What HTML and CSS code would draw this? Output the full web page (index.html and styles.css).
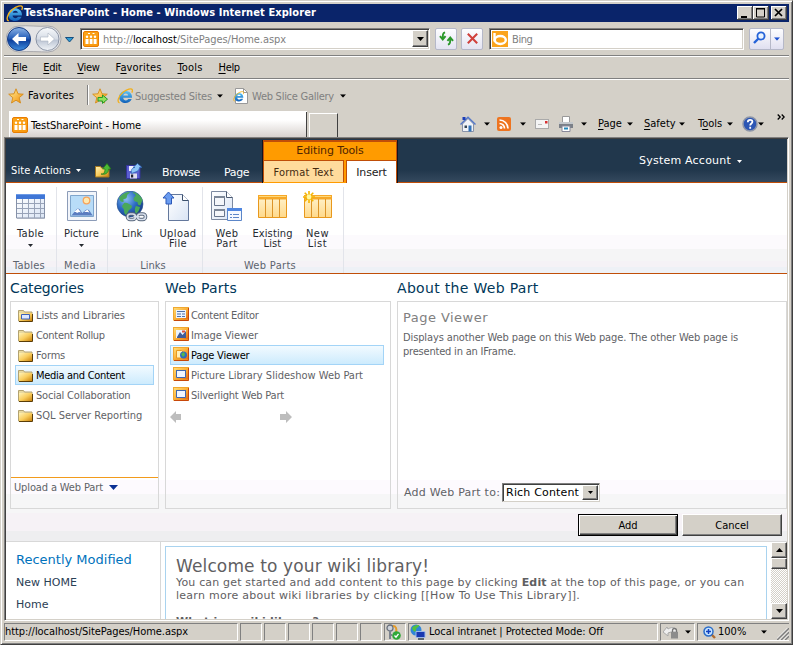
FILE: index.html
```html
<!DOCTYPE html>
<html lang="en">
<head>
<meta charset="utf-8">
<title>TestSharePoint - Home</title>
<link rel="stylesheet" href="styles.css">
</head>
<body>
<svg class="defs" width="0" height="0">
  <defs>
    <linearGradient id="gBlue" x1="0" y1="0" x2="0" y2="1"><stop offset="0" stop-color="#8db4e6"/><stop offset=".45" stop-color="#2a62bb"/><stop offset=".55" stop-color="#0d3f9c"/><stop offset="1" stop-color="#3f8fe0"/></linearGradient>
    <linearGradient id="gGrey" x1="0" y1="0" x2="0" y2="1"><stop offset="0" stop-color="#f8fafc"/><stop offset=".5" stop-color="#d5dbe5"/><stop offset=".55" stop-color="#bcc5d4"/><stop offset="1" stop-color="#f2f5f8"/></linearGradient>
    <linearGradient id="gFolder" x1="0" y1="0" x2="1" y2="1"><stop offset="0" stop-color="#fff3b8"/><stop offset=".5" stop-color="#f8cc5c"/><stop offset="1" stop-color="#c87f08"/></linearGradient>
    <linearGradient id="gStar" x1="0" y1="0" x2="1" y2="1"><stop offset="0" stop-color="#fff3a0"/><stop offset="1" stop-color="#f28a00"/></linearGradient>
    <linearGradient id="gOrange" x1="0" y1="0" x2="1" y2="1"><stop offset="0" stop-color="#fba51c"/><stop offset="1" stop-color="#f9980c"/></linearGradient>
    <linearGradient id="gPart" x1="0" y1="0" x2="1" y2="1"><stop offset="0" stop-color="#ffe07a"/><stop offset=".5" stop-color="#fbb03a"/><stop offset="1" stop-color="#e0620c"/></linearGradient>
    <linearGradient id="gSheet" x1="0" y1="0" x2="1" y2="1"><stop offset="0" stop-color="#fff"/><stop offset="1" stop-color="#d9e4f4"/></linearGradient>
    <linearGradient id="gList" x1="0" y1="0" x2="0" y2="1"><stop offset="0" stop-color="#fff4d0"/><stop offset="1" stop-color="#ffd98a"/></linearGradient>
    <linearGradient id="gIe" x1="0" y1="0" x2="0" y2="1"><stop offset="0" stop-color="#5cc4f6"/><stop offset="1" stop-color="#0f5fb8"/></linearGradient>
    <radialGradient id="gGlobe" cx=".35" cy=".3" r=".8"><stop offset="0" stop-color="#8cc0f4"/><stop offset=".5" stop-color="#2e6cc4"/><stop offset="1" stop-color="#12357c"/></radialGradient>
    <symbol id="caret" viewBox="0 0 7 4"><path d="M0 0h7L3.5 4z"/></symbol>
    <symbol id="ie" viewBox="0 0 16 16"><path d="M15 9.800H6.200c.2 3 4 3.400 5 1.300h3.500C12.500 17 2.200 16.500 2.200 9 2.200.8 15.600.8 15 9.800zM6.300 7.400h4.900c-.3-2.700-4.500-2.700-4.900 0z" fill="url(#gIe)"/><path d="M2.600 15C-.2 14.200 1 8.500 6 4.300 10 1 14.600 0 15.300 1.700c.3.800 0 1.900-.5 2.900" fill="none" stroke="#f2b01c" stroke-width="1.300"/></symbol>
    <symbol id="site" viewBox="0 0 16 16"><rect x=".5" y=".5" width="15" height="15" rx="1.500" fill="url(#gOrange)" stroke="#e87c00"/><path d="M2.500 8h3v5h-3zM6.700 8h2.800v5H6.700zM10.600 8h3v5h-3z" fill="#fff"/><circle cx="4" cy="5.700" r="1.200" fill="#fff"/><circle cx="8" cy="5.700" r="1.200" fill="#fff"/><circle cx="12" cy="5.700" r="1.200" fill="#fff"/><path d="M5 2.500h2M9.500 2.500h2" stroke="#fff"/></symbol>
    <symbol id="folder" viewBox="0 0 15 13"><path d="M.5 1.500h5l1 1.500h7.500v9H.5z" fill="#e8d9a0" stroke="#b3a270"/><path d="M1 4h13v8.500H1z" fill="url(#gFolder)"/><path d="M1 12.500h13.500V5" fill="none" stroke="#5a3d08"/></symbol>
    <symbol id="part" viewBox="0 0 16 14"><rect x=".5" y=".5" width="15" height="12.500" fill="url(#gPart)" stroke="#f0a830"/><path d="M15.500 1v12.500H1" fill="none" stroke="#c8480a"/></symbol>
    <symbol id="star" viewBox="0 0 16 16"><path d="M8 .8l2 5 5.300.4-4.100 3.500 1.300 5.300L8 12.200 3.500 15l1.300-5.300L.7 6.200 6 5.800z" fill="url(#gStar)" stroke="#d58a18" stroke-width=".9"/></symbol>
  </defs>
</svg>

<div class="window">
  <header class="title-bar">
    <svg class="title-icon" viewBox="0 0 16 16"><use href="#ie"/></svg>
    <span class="title-text">TestSharePoint - Home - Windows Internet Explorer</span>
    <span class="caption">
      <svg viewBox="0 0 16 14"><path d="M4 10h6v2H4z"/></svg>
      <svg viewBox="0 0 16 14"><path d="M3.500 3h8v8h-8zM3 2.500h9" fill="none" stroke="#000"/></svg>
      <svg class="close" viewBox="0 0 16 14"><path d="M4 3l7 7M11 3l-7 7" fill="none" stroke="#000" stroke-width="1.700"/></svg>
    </span>
  </header>

  <div class="nav-bar">
    <svg class="travel" viewBox="0 0 56 28">
      <path d="M13 1c8-1 20 1 29 0a13 13 0 0 1 0 26c-8 0-20-1-29 0a13 13 0 0 1 0-26z" fill="#e4e4e6" stroke="#a8a8ac"/>
      <circle cx="13" cy="14" r="11.500" fill="url(#gBlue)" stroke="#173d84"/>
      <path d="M6 14l6.500-6v4h7.500v4h-7.500v4z" fill="#fff"/>
      <circle cx="41.500" cy="14" r="11.500" fill="url(#gGrey)" stroke="#8b94a5"/>
      <path d="M48.500 14L42 8v4h-7.500v4H42v4z" fill="#fff" stroke="#aab2c0" stroke-width=".6"/>
    </svg>
    <svg class="recent" viewBox="0 0 9 6"><path d="M.5.500h8L4.500 5z" fill="#2f9cd4" stroke="#154f80"/></svg>
    <div class="field address">
      <svg class="i16" viewBox="0 0 16 16"><use href="#site"/></svg>
      <span class="url">http://<b>localhost</b>/SitePages/Home.aspx</span>
      <span class="drop-btn"><svg viewBox="0 0 7 4"><use href="#caret"/></svg></span>
    </div>
    <span class="tool-btn"><svg viewBox="0 0 16 16"><path d="M6.500 1.500C4 2 4 4 4 8M1 5.500L4 9l3-3.500M9.500 14.500c2.500-.5 2.500-2.500 2.500-6.500M9 10.500L12 7l3 3.500" fill="none" stroke="#2b982b" stroke-width="2"/></svg></span>
    <span class="tool-btn stop"><svg viewBox="0 0 16 16"><path d="M3 3l10 10M13 3L3 13" stroke="#d0403c" stroke-width="2.200"/></svg></span>
    <div class="field search">
      <svg class="i16" viewBox="0 0 16 16"><path d="M0 0h16v16H0z" fill="#fba41c"/><path d="M2.500 2v8.500" stroke="#fff" stroke-width="2.400"/><ellipse cx="8.300" cy="9" rx="5.500" ry="4" fill="none" stroke="#fff" stroke-width="2.400"/></svg>
      <span>Bing</span>
    </div>
    <div class="go">
      <svg class="lens" viewBox="0 0 13 13"><circle cx="8" cy="5" r="3.600" fill="#e8f2ff" stroke="#2563d8" stroke-width="1.800"/><path d="M5.500 7.500L1 12" stroke="#2563d8" stroke-width="2.400"/></svg>
      <span class="go-drop"><svg viewBox="0 0 7 4"><use href="#caret"/></svg></span>
    </div>
  </div>

  <nav class="menu-bar">
    <span><u>F</u>ile</span><span><u>E</u>dit</span><span><u>V</u>iew</span><span class="loose">F<u>a</u>vorites</span><span class="loose"><u>T</u>ools</span><span><u>H</u>elp</span>
  </nav>

  <div class="fav-bar">
    <svg class="i16" viewBox="0 0 16 16"><use href="#star"/></svg>
    <span class="fav-label">Favorites</span>
    <span class="fav-sep"></span>
    <svg class="i16 add" viewBox="0 0 16 16"><use href="#star"/><path d="M6 9.500h4.500V7l5 4.200-5 4.200V13H6z" fill="#8fe05c" stroke="#259a28"/></svg>
    <svg class="i16 ie" viewBox="0 0 16 16"><use href="#ie"/></svg>
    <span class="fav-link sites">Suggested Sites</span>
    <svg class="caret" viewBox="0 0 7 4"><use href="#caret"/></svg>
    <svg class="i16 slice" viewBox="0 0 16 16"><path d="M2.500.5h8l4 4v11h-12z" fill="#fff" stroke="#999"/><path d="M10.500.5v4h4" fill="none" stroke="#999"/><use href="#ie" x="0" y="3" width="11" height="11"/></svg>
    <span class="fav-link gallery">Web Slice Gallery</span>
    <svg class="caret" viewBox="0 0 7 4"><use href="#caret"/></svg>
  </div>

  <div class="tab-bar">
    <div class="tab"><svg class="i16" viewBox="0 0 16 16"><use href="#site"/></svg><span>TestSharePoint - Home</span></div>
    <div class="new-tab"></div>
    <div class="commands">
      <svg class="i16" viewBox="0 0 16 16"><path d="M2.500 8v7.500h11V8L8 2.500z" fill="#f1f3f8" stroke="#8a93a8"/><path d="M.5 8.500L8 1.200l7.500 7.300" fill="none" stroke="#5578c8" stroke-width="1.500"/><path d="M2.500 1h3v3h-3z" fill="#1a3cb8"/><path d="M8.500 9.500h3v6h-3z" fill="#3272b8"/><path d="M4.500 9.500h2.500v2.500H4.500z" fill="#345"/></svg>
      <svg class="caret c1" viewBox="0 0 7 4"><use href="#caret"/></svg>
      <svg class="rss" viewBox="0 0 14 14"><rect width="14" height="14" rx="2" fill="#ee7420"/><circle cx="4" cy="10.500" r="1.500" fill="#fff"/><path d="M2.500 6.500a5 5 0 0 1 5 5M2.500 3a8.500 8.500 0 0 1 8.500 8.500" fill="none" stroke="#fff" stroke-width="1.700"/></svg>
      <svg class="caret c2" viewBox="0 0 7 4"><use href="#caret"/></svg>
      <svg class="mail" viewBox="0 0 15 10"><rect x=".5" y=".5" width="13" height="9" fill="#f4f4f4" stroke="#aaa"/><path d="M10 2h2.500v2.500H10z" fill="#d83030"/><path d="M3 5.500h4" stroke="#bbb"/></svg>
      <svg class="i16 printer" viewBox="0 0 16 16"><path d="M4.500 6V.5h7V6" fill="#fff" stroke="#999"/><path d="M1 6h14v6H1z" fill="#7b8088"/><path d="M1 6h14v2H1z" fill="#c4c8cc"/><path d="M4 10h8v5.500H4z" fill="#fff" stroke="#889"/><path d="M6 12.500h4" stroke="#28b" stroke-width="2"/></svg>
      <svg class="caret c3" viewBox="0 0 7 4"><use href="#caret"/></svg>
      <span class="cmd cmd-page"><u>P</u>age</span><svg class="caret" viewBox="0 0 7 4"><use href="#caret"/></svg>
      <span class="cmd cmd-safety"><u>S</u>afety</span><svg class="caret" viewBox="0 0 7 4"><use href="#caret"/></svg>
      <span class="cmd cmd-tools">T<u>o</u>ols</span><svg class="caret" viewBox="0 0 7 4"><use href="#caret"/></svg>
      <svg class="i16 help" viewBox="0 0 16 16"><circle cx="8" cy="8" r="7" fill="#2c56b4" stroke="#8d95a8" stroke-width="1.500"/><path d="M5.800 6.200c0-3.200 4.600-3 4.600-.4 0 1.700-2.200 1.700-2.200 3.700M8.200 10.800v1.900" fill="none" stroke="#fff" stroke-width="1.800"/></svg>
      <svg class="caret" viewBox="0 0 7 4"><use href="#caret"/></svg>
      <svg class="more" viewBox="0 0 8 6"><path d="M.7.5L3.200 3 .7 5.500M4.700.5L7.200 3 4.700 5.500" fill="none" stroke="#000" stroke-width="1.300"/></svg>
    </div>
  </div>

  <main class="viewport">
    <div class="sp-header">
      <span class="site-actions">Site Actions</span>
      <svg class="caret small" viewBox="0 0 7 4"><use href="#caret"/></svg>
      <svg class="i16 up" viewBox="0 0 16 16"><path d="M.5 4.500h5l1 1.500h7.500v9H.5z" fill="url(#gFolder)" stroke="#a47820"/><path d="M6 12c3 .5 4-2 4-5H7.500L12 1.500 16 7h-2.500c0 4-3 6-7.500 5z" fill="#4cb834" stroke="#1f7a18" stroke-width=".7"/></svg>
      <svg class="i16 save" viewBox="0 0 16 16"><path d="M.5 2.500h13.500v13H.5z" fill="#5a5ed0" stroke="#34349a"/><path d="M3 3h8v5H3z" fill="#eef"/><path d="M4 10.500h7v5H4z" fill="#dde"/><path d="M5 11.500h2.200v3H5z" fill="#223"/><path d="M5.500 10.500C4.500 6 7 4.500 9 4.500H7L11.500.5 16 4.500h-2.500c-.5 4-3 4-8 6z" fill="#8cc4f6" stroke="#2860b0" stroke-width=".7"/></svg>
      <span class="top-tab browse">Browse</span>
      <span class="top-tab page-tab">Page</span>
      <div class="context">
        <div class="context-name">Editing Tools</div>
        <div class="context-tabs"><span class="format">Format Text</span><span class="insert">Insert</span></div>
      </div>
      <div class="account"><span>System Account</span><svg class="caret small" viewBox="0 0 7 4"><use href="#caret"/></svg></div>
    </div>

    <div class="ribbon">
      <section class="group g-tables">
        <div class="cmds"><div class="cmd-btn">
          <svg class="i32" viewBox="0 0 32 32"><path d="M2 5.500h28V28H2z" fill="#cfd3da"/><path d="M1.500 4.500h28V27h-28z" fill="url(#gSheet)" stroke="#8591a8"/><path d="M1 3h29v5H1z" fill="#3f76d6"/><path d="M1 3.500h29" stroke="#6c9ae6"/><path d="M7.500 8v19M13.500 8v19M19.500 8v19M25.500 8v19M2 12.500h27M2 17.500h27M2 22.500h27" stroke="#98a3b8"/></svg>
          <span class="lbl l3">Table</span><svg class="caret tiny" viewBox="0 0 7 4"><use href="#caret"/></svg></div></div>
        <h3 class="l2">Tables</h3>
      </section>
      <section class="group g-media">
        <div class="cmds"><div class="cmd-btn">
          <svg class="i32" viewBox="0 0 32 32"><path d="M1.500.5h29v29h-29z" fill="#f2f5fa" stroke="#8c9cb8"/><path d="M4.500 4.500h23v21h-23z" fill="#b8dcf8" stroke="#7fa5cc"/><circle cx="20.500" cy="9.500" r="3.300" fill="#ffe9b0" stroke="#f8a45c" stroke-width="1.300"/><path d="M5 24.500c3-2 5-7 7-7s3 3 4.500 4.500c2-2 3-3.500 5-3.500s3 3.500 5.500 6z" fill="#5a7cc0"/><path d="M8 21l4-3.500 3 4-2-.5-2 1-1-1zM18 21l3.500-2.500 2 3-2-.5z" fill="#fff"/></svg>
          <span class="lbl">Picture</span><svg class="caret tiny" viewBox="0 0 7 4"><use href="#caret"/></svg></div></div>
        <h3 class="l4">Media</h3>
      </section>
      <section class="group g-links">
        <div class="cmds"><div class="cmd-btn w46">
          <svg class="i32" viewBox="0 0 32 32"><circle cx="14" cy="13" r="13" fill="url(#gGlobe)" stroke="#28508c" stroke-width=".6"/><path d="M3 7c3-4 7-6.500 11-6-1 2-3 2-3 4s-1 3-3 3 1 3-1 3-3-1-4-4zM17 1c5 1 8 4 9.500 8l-2 5c-2 1-3-1-3-3-2 0-4-1-4-3s2-2 2-4-3-1-2.500-3zM8 12c3-1 5 1 8 3 0 3-3 3-4 6l-2 3c-3-2-1-5-3-7s0-3 1-5zM20 15l4 1c-.500 3-2 5-4 7-1-2-2-5 0-8z" fill="#4aa85a"/><g fill="none" stroke="#58677c" stroke-width="3.600"><rect x="11.500" y="23" width="8" height="5.500" rx="2.700"/><rect x="21.500" y="23" width="8" height="5.500" rx="2.700"/></g><g fill="none" stroke="#d8e0ec" stroke-width="1.700"><rect x="11.500" y="23" width="8" height="5.500" rx="2.700"/><rect x="21.500" y="23" width="8" height="5.500" rx="2.700"/><path d="M17.500 25.700h6"/></g></svg>
          <span class="lbl">Link</span></div>
        <div class="cmd-btn w44">
          <svg class="i32" viewBox="0 0 32 32"><path d="M6.500 3.500h14l6 6v20h-20z" fill="url(#gSheet)" stroke="#64789c"/><path d="M20.500 3.500v6h6" fill="#fff" stroke="#3c506c"/><path d="M6.500 1l5.500 6H9.500v6H4V7H1z" fill="#6a9cf0" stroke="#2c58b8"/></svg>
          <span class="lbl l5">Upload<br>File</span></div></div>
        <h3>Links</h3>
      </section>
      <section class="group g-parts">
        <div class="cmds"><div class="cmd-btn w46">
          <svg class="i32" viewBox="0 0 32 32"><path d="M.5.5h15l6 6v22H.5z" fill="url(#gSheet)" stroke="#7c89a0"/><path d="M15.500.5v6h6" fill="#fff" stroke="#4a5870"/><path d="M3.500 5.500h10v9h-10zM3.500 18.500h10v7h-10z" fill="#f4f6fa" stroke="#68758c"/><path d="M3 6h11M3 19h11" stroke="#7c8798" stroke-width="2"/><path d="M16.500 17.500h14v12h-14z" fill="#f4f9ff" stroke="#5c86c8"/><path d="M16 17h15v3H16z" fill="#4f86e0"/><path d="M19 23.500h2M19 26.500h2M22 23.500h6M22 26.500h6" stroke="#5c86c8"/></svg>
          <span class="lbl l4">Web<br>Part</span></div>
        <div class="cmd-btn w44">
          <svg class="i32" viewBox="0 0 32 32"><path d="M1.500 4.500h28v22h-28z" fill="url(#gList)" stroke="#e8981c"/><path d="M1 4h29v4.500H1z" fill="#f6a828"/><path d="M2 5.500h27" stroke="#ffd878"/><path d="M8.500 8v18M15.500 8v18M22.500 8v18" stroke="#dc9428"/></svg>
          <span class="lbl">Existing<br>List</span></div>
        <div class="cmd-btn w45">
          <svg class="i32" viewBox="0 0 32 32"><path d="M2.500 4.500h27v22h-27z" fill="url(#gList)" stroke="#e8981c"/><path d="M2 4h28v4.500H2z" fill="#f6a828"/><path d="M2 5.500h27" stroke="#ffd878"/><path d="M9.500 8v18M16.500 8v18M23.500 8v18" stroke="#dc9428"/><path d="M7 0v12M1 6h12M2.700 1.700l8.600 8.600M11.300 1.700l-8.600 8.600" stroke="#f4b400" stroke-width="1.600"/><circle cx="7" cy="6" r="2.400" fill="#fff8a0"/></svg>
          <span class="lbl l4">New<br>List</span></div></div>
        <h3 class="l3 web-parts">Web Parts</h3>
      </section>
    </div>

    <div class="picker">
      <div class="columns">
        <section class="col-cat">
          <h2 class="h-cat">Categories</h2>
          <div class="box">
            <ul class="list cats">
              <li><svg viewBox="0 0 15 13"><use href="#folder"/><path d="M3.500 5.500h8v4.500h-8z" fill="#dce8ff" stroke="#3c62b8"/></svg><span class="n0">Lists and Libraries</span></li>
              <li><svg viewBox="0 0 15 13"><use href="#folder"/></svg><span class="n3">Content Rollup</span></li>
              <li><svg viewBox="0 0 15 13"><use href="#folder"/></svg><span class="n2">Forms</span></li>
              <li class="selected"><svg viewBox="0 0 15 13"><use href="#folder"/></svg><span class="n3">Media and Content</span></li>
              <li><svg viewBox="0 0 15 13"><use href="#folder"/></svg><span class="n2">Social Collaboration</span></li>
              <li><svg viewBox="0 0 15 13"><use href="#folder"/></svg><span>SQL Server Reporting</span></li>
            </ul>
            <div class="upload"><span>Upload a Web Part</span><svg viewBox="0 0 9 5"><path d="M0 0h9L4.500 5z" fill="#0b3194"/></svg></div>
          </div>
        </section>
        <section class="col-parts">
          <h2 class="l2">Web Parts</h2>
          <div class="box">
            <ul class="list parts">
              <li><svg viewBox="0 0 16 14"><use href="#part"/><path d="M3 3h10v8H3z" fill="#eaf3ff"/><path d="M4 4.500h8M4 7h4M9 7h3M4 9.500h4M9 9.500h3" stroke="#5070a8"/></svg><span class="n3">Content Editor</span></li>
              <li><svg viewBox="0 0 16 14"><use href="#part"/><path d="M3 3h10v8H3z" fill="#eaf3ff"/><path d="M4 10l3-5 2.500 3L13 4v7H4z" fill="#405c98"/><path d="M9 3.500h3v2H9z" fill="#e05038"/></svg><span class="n0">Image Viewer</span></li>
              <li class="selected"><svg viewBox="0 0 16 14"><use href="#part"/><path d="M3.500 3.500h5l2 2V11h-7z" fill="#fff0b8" stroke="#e89a20"/><circle cx="10.500" cy="8" r="3.500" fill="#2f6cbc"/><path d="M8 7l3-2 1 3-2 2z" fill="#56b848"/></svg><span class="n2">Page Viewer</span></li>
              <li><svg viewBox="0 0 16 14"><use href="#part"/><path d="M3.500 3.500h9v7h-9z" fill="#f2f7ff" stroke="#4068b0"/><path d="M3 3.500h10" stroke="#4068b0"/></svg><span>Picture Library Slideshow Web Part</span></li>
              <li><svg viewBox="0 0 16 14"><use href="#part"/><path d="M3.500 3.500h9v7h-9z" fill="#f2f7ff" stroke="#4068b0"/><path d="M3 3.500h10" stroke="#4068b0"/></svg><span class="n2">Silverlight Web Part</span></li>
            </ul>
            <div class="pager"><svg viewBox="0 0 12 12"><path d="M0 6l6-6v3h5v6H6v3z"/></svg><svg viewBox="0 0 12 12"><path d="M12 6L6 0v3H0v6h6v3z"/></svg></div>
          </div>
        </section>
        <section class="col-about">
          <h2 class="l3">About the Web Part</h2>
          <div class="box about">
            <h4>Page Viewer</h4>
            <p><span class="n1">Displays another Web page on this Web page. The other Web page is</span><br><span class="n2">presented in an IFrame.</span></p>
            <div class="target"><label>Add Web Part to:</label><span class="select"><span>Rich Content</span><span class="drop-btn"><svg viewBox="0 0 7 4"><use href="#caret"/></svg></span></span></div>
          </div>
        </section>
      </div>
      <div class="actions"><button class="default">Add</button><button>Cancel</button></div>
    </div>

    <div class="page">
      <aside><h2>Recently Modified</h2><a>New HOME</a><a>Home</a></aside>
      <article>
        <h1>Welcome to your wiki library!</h1>
        <p><span>You can get started and add content to this page by clicking <b>Edit</b> at the top of this page, or you can</span><br><span class="wide">learn more about wiki libraries by clicking [[How To Use This Library]].</span></p>
        <h3>What is a wiki library?</h3>
      </article>
      <div class="scrollbar"><span class="sb"><svg viewBox="0 0 7 4"><path d="M0 4h7L3.500 0z"/></svg></span><span class="thumb"></span><span class="sb end"><svg viewBox="0 0 7 4"><use href="#caret"/></svg></span></div>
    </div>
  </main>

  <footer class="status">
    <span class="pane addr">http://localhost/SitePages/Home.aspx</span>
    <span class="pane s"></span><span class="pane s"></span><span class="pane s"></span><span class="pane s"></span><span class="pane s"></span><span class="pane s"></span>
    <span class="pane s key"><svg class="i16" viewBox="0 0 16 16"><circle cx="5" cy="4" r="3" fill="#cdd2da" stroke="#69707c" stroke-width="1.300"/><path d="M5 7v8M5 11h2" stroke="#7c838e" stroke-width="2"/><path d="M8 2c3 0 4 3 3 6" fill="none" stroke="#e49a28" stroke-width="2"/><circle cx="11.500" cy="11.500" r="4.300" fill="#2fa838"/><path d="M9.500 11.500l1.500 1.700 2.500-3.400" fill="none" stroke="#fff" stroke-width="1.300"/></svg></span>
    <span class="pane zone"><svg class="i16" viewBox="0 0 16 16"><circle cx="6" cy="6" r="5.500" fill="#2f86d8"/><path d="M2 4c2-3 5-3 7-3 0 3-3 2-3 5S3 8 2 4z" fill="#54c040"/><path d="M6 7.500h9v6H6z" fill="#1838b0" stroke="#9cb8e8"/><path d="M8 15h6" stroke="#345" stroke-width="1.500"/></svg><span>Local intranet | Protected Mode: Off</span></span>
    <span class="pane lock"><svg class="i16" viewBox="0 0 16 16"><path d="M0 8l4-5 1 2c5-3 8-1 9 3H8l-3 1v3z" fill="#eee" stroke="#a8a8a8"/><path d="M8 8h7v6.500H8z" fill="#8c8c8c"/><path d="M9.500 8V6.500a2 2 0 0 1 4 0V8" fill="none" stroke="#777" stroke-width="1.300"/></svg><svg class="caret" viewBox="0 0 7 4"><use href="#caret"/></svg></span>
    <span class="pane zoom"><svg class="lens" viewBox="0 0 13 13"><path d="M8 8l4 4" stroke="#b06c30" stroke-width="2.400"/><circle cx="5.500" cy="5.500" r="4.500" fill="#c8e4ff" stroke="#2a6cc8" stroke-width="1.500"/><path d="M3 5.500h5M5.500 3v5" stroke="#1040c0" stroke-width="1.500"/></svg><span>100%</span><svg class="caret" viewBox="0 0 7 4"><use href="#caret"/></svg>
      <svg class="grip" viewBox="0 0 12 12"><path d="M0 12L12 0M4 12l8-8M8 12l4-4" stroke="#808080" stroke-width="1.600"/><path d="M-1.500 12L12-1.500M2.500 12L12 2.500M6.500 12L12 6.500" stroke="#fff" stroke-width=".8"/></svg></span>
  </footer>
</div>
</body>
</html>
```
FILE: styles.css
```css
* { box-sizing: border-box; }
body { margin: 0; font: 11px/14px Tahoma, "DejaVu Sans Condensed", sans-serif; color: #000; white-space: nowrap; }
h1, h2, h3, h4, p, ul { margin: 0; padding: 0; font-weight: normal; }
svg { display: block; flex: none; }
.defs { position: absolute; }
u { text-underline-offset: 2px; }
.i16 { width: 16px; height: 16px; }
.i32 { width: 32px; height: 32px; }
.caret { width: 6px; height: 4px; }

.window { width: 793px; height: 645px; padding: 3px; background: #d4d0c8; border: 1px solid #d4d0c8; border-right-color: #404040; border-bottom-color: #404040; box-shadow: inset 1px 1px #fff, inset -1px -1px #808080; display: flex; flex-direction: column; overflow: hidden; }
.window > * { flex: none; }

.title-bar { height: 18px; display: flex; align-items: center; background: #0a246a; color: #fff; }
.title-icon { width: 17px; height: 17px; margin-left: 2px; }
.title-text { margin-left: 1px; font-weight: bold; letter-spacing: .08px; }
.caption { margin-left: auto; margin-right: 2px; display: flex; }
.caption svg { width: 16px; height: 14px; background: #d4d0c8; box-shadow: inset -1px -1px #404040, inset 1px 1px #fff, inset -2px -2px #808080; }
.caption .close { margin-left: 2px; }

.nav-bar { height: 34px; display: flex; align-items: center; border-bottom: 1px solid #808080; }
.travel { width: 56px; height: 28px; margin-left: 2px; }
.recent { width: 9px; height: 6px; margin: 2px 0 0 3px; }
.field { height: 22px; background: #fff; border: 1px solid #808080; border-right-color: #fff; border-bottom-color: #fff; box-shadow: inset 1px 1px #404040, inset -1px -1px #d4d0c8; display: flex; align-items: center; padding: 0 1px 0 2px; color: #808080; }
.address { width: 350px; margin-left: 6px; }
.url { margin-left: 4px; padding-top: 2px; letter-spacing: -.06px; }
.url b { font-weight: normal; color: #000; }
.drop-btn { width: 16px; height: 17px; background: #d4d0c8; border: 1px solid #fff; border-right-color: #404040; border-bottom-color: #404040; box-shadow: inset -1px -1px #808080; display: flex; align-items: center; justify-content: center; }
.drop-btn svg { width: 7px; height: 4px; fill: #000; }
.address .drop-btn { margin-left: auto; }
.tool-btn { width: 22px; height: 22px; margin-left: 5px; border: 1px solid #b5b8c8; border-radius: 2px; background: linear-gradient(#fdfdff, #e4e4f2); display: flex; align-items: center; justify-content: center; }
.tool-btn svg { width: 15px; height: 15px; }
.tool-btn.stop { margin-left: 4px; }
.search { width: 255px; margin-left: 6px; }
.search span { margin-left: 4px; padding-top: 2px; letter-spacing: -.4px; }
.go { width: 35px; height: 22px; margin-left: 5px; border: 1px solid #b5b8c8; border-radius: 2px; background: linear-gradient(#fdfdff, #e0e0f0); display: flex; align-items: center; }
.go .lens { width: 13px; height: 13px; margin: 0 4px 2px 3px; }
.go-drop { align-self: stretch; border-left: 1px solid #b5b8c8; padding: 8px 0 0 3px; }
.go-drop svg { width: 6px; height: 4px; fill: #1c50d0; }

.menu-bar { height: 23px; display: flex; align-items: center; border-top: 1px solid #fff; border-bottom: 1px solid #808080; padding-left: 8px; padding-top: 1px; letter-spacing: -.3px; }
.menu-bar span { margin-right: 16px; }
.menu-bar .loose { letter-spacing: .15px; }

.fav-bar { height: 32px; display: flex; align-items: center; border-top: 1px solid #fff; padding-left: 4px; }
.fav-label { margin-left: 4px; width: 59px; letter-spacing: .15px; }
.fav-sep { height: 20px; width: 2px; margin: -2px 0 0; border-left: 1px solid #808080; border-right: 1px solid #fff; }
.add { margin-left: 3px; }
.fav-bar .ie { margin-left: 9px; }
.fav-link { color: #808080; margin-left: 2px; padding-top: 2px; }
.sites { width: 82px; letter-spacing: -.2px; }
.slice { margin-left: 10px; }
.gallery { margin-left: 3px; width: 88px; letter-spacing: -.26px; }

.tab-bar { height: 26px; display: flex; align-items: flex-end; }
.tab { width: 298px; height: 26px; margin-left: 5px; padding: 1px 0 0 2px; display: flex; align-items: center; background: linear-gradient(#fff 8px, #d8d2ce); border: 1px solid #fff; border-width: 1px 0 0 1px; box-shadow: inset -1px 0 #404040; }
.tab span { margin-left: 3px; padding-top: 2px; letter-spacing: -.07px; }
.new-tab { width: 29px; height: 24px; margin-left: 2px; border: 1px solid #fff; border-bottom: 0; border-right-color: #404040; }
.commands { display: flex; align-items: center; height: 26px; margin-left: 122px; }
.c1 { margin: 0 7px 0 8px; }
.rss { width: 14px; height: 14px; }
.c2 { margin: 0 9px; }
.mail { width: 15px; height: 10px; }
.printer { margin-left: 8px; }
.c3 { margin-left: 7px; }
.cmd-page { width: 29px; margin-left: 11px; }
.cmd-safety { width: 35px; margin-left: 11px; }
.cmd-tools { width: 29px; margin-left: 13px; }
.help { margin-left: 9px; }
.more { width: 8px; height: 6px; margin: -14px 0 0 13px; }

.viewport { height: 484px; border: 1px solid #808080; border-right-color: #fff; border-bottom-color: #fff; box-shadow: inset 1px 1px #404040, inset -1px -1px #d4d0c8; padding: 1px; background: #fff; display: flex; flex-direction: column; overflow: hidden; }
.viewport > * { flex: none; }

.sp-header { height: 44px; display: flex; align-items: flex-start; background: linear-gradient(#21374c 31px, #31465b 41px); border-bottom: 1px solid #c04e08; color: #fff; }
.site-actions { margin: 25px 0 0 5px; width: 65px; letter-spacing: .12px; }
.sp-header .small { margin-top: 30px; width: 5px; height: 3px; fill: #fff; }
.up { margin: 23px 0 0 14px; }
.save { margin: 24px 0 0 15px; }
.top-tab, .context, .account, .picker h2, .page, .target { font-family: Verdana, "DejaVu Sans", sans-serif; }
.top-tab { margin-top: 27px; letter-spacing: -.34px; }
.browse { margin-left: 20px; width: 62px; }
.page-tab { width: 38px; }
.context { width: 136px; height: 44px; margin-top: 1px; border: solid #0f151e; border-width: 0 1px; background: #ff9b00; }
.context-name { height: 20px; border: 1px solid #c04e08; border-width: 2px 1px 0; color: #4f2500; text-align: center; line-height: 18px; letter-spacing: -.12px; }
.context-tabs { display: flex; height: 23px; }
.format { width: 81px; height: 22px; border: 1px solid #c04e08; border-bottom: 0; background: #ffdb9c; color: #442a10; text-align: center; line-height: 23px; font-family: Tahoma, "DejaVu Sans Condensed", sans-serif; letter-spacing: .2px; }
.insert { width: 51px; height: 23px; margin-left: 2px; border: 1px solid #c04e08; border-bottom: 0; background: #fff; color: #222; text-align: center; line-height: 23px; letter-spacing: -.2px; }
.account { display: flex; margin: 15px 0 0 241px; letter-spacing: .22px; }
.sp-header .account .small { margin: 6px 0 0 6px; }

.ribbon { height: 91px; display: flex; background: linear-gradient(#fff 52px, #fcfafd 52px 66px, #f5f5f6 66px 78px, #f5f2f6 78px 84px, #eef1f6 84px); border-bottom: 1px solid #c04e08; color: #262a30; }
.group { display: flex; flex-direction: column; justify-content: space-between; border-right: 1px solid #e2e4ea; padding-top: 8px; margin-top: 4px; }
.g-tables, .g-media { width: 51px; }
.g-links { width: 95px; }
.g-parts { width: 141px; }
.cmds { display: flex; padding: 0 1px 0 0; }
.cmd-btn { flex: 1; display: flex; flex-direction: column; align-items: center; margin-top: -4px; }
.cmd-btn.w44, .cmd-btn.w45, .cmd-btn.w46 { flex: none; width: 45px; }
.cmd-btn.w46 { width: 48px; }
.cmd-btn.w44 { width: 44px; }
.g-parts .cmd-btn.w44 { width: 43px; }
.g-parts .cmd-btn.w45 { width: 47px; }
.lbl { margin-top: 6px; line-height: 10px; text-align: center; letter-spacing: .12px; }
.tiny { width: 5px; height: 3px; margin-top: 5px; fill: #262a30; }
.group h3 { font-size: 11px; line-height: 14px; text-align: center; color: #5c636e; padding-right: 4px; }
.group .web-parts { padding-right: 6px; }
.l2 { letter-spacing: .23px; }
.l3 { letter-spacing: .32px; }
.l4 { letter-spacing: .5px; }
.l5 { letter-spacing: .4px; }
.n0 { letter-spacing: -.06px; }
.n1 { letter-spacing: -.12px; }
.n2 { letter-spacing: -.2px; }
.n3 { letter-spacing: -.3px; }

.picker { height: 268px; background: linear-gradient(#fff 206px, #fdfafe 206px 220px, #f6f6f7 220px 239px, #f6f2f6 239px 257px, #eeeef0 257px); border-bottom: 1px solid #d8d8d8; }
.columns { display: flex; gap: 6px; padding-left: 4px; }
.picker h2 { height: 27px; font-size: 14px; line-height: 28px; color: #003759; }
.picker h2.h-cat { letter-spacing: -.15px; }
.col-cat { width: 149px; }
.col-parts { width: 226px; }
.col-about { width: 390px; }
.box { height: 208px; border: 1px solid #d8d8d8; display: flex; flex-direction: column; color: #5f6266; }
.list { list-style: none; padding: 3px 4px 0; }
.list.parts { padding-right: 6px; }
.list li { height: 20px; display: flex; align-items: center; border: 1px solid transparent; padding-left: 2px; }
.list li span { padding-top: 2px; }
.list li svg { width: 15px; height: 13px; margin-right: 3px; }
.list.parts li svg { width: 16px; height: 14px; margin: -2px 2px 0 0; }
.list .selected { color: #000; border-color: #a3d4f7; background: linear-gradient(#f2faff, #cdebfd); }
.upload { margin-top: auto; height: 31px; border-top: 1px solid #f29b1c; display: flex; padding: 3px 0 0 3px; letter-spacing: -.13px; }
.upload svg { width: 9px; height: 5px; margin: 4px 0 0 6px; }
.pager { display: flex; justify-content: space-between; margin: 6px 98px 0 4px; }
.pager svg { width: 12px; height: 12px; fill: #bdbdbd; }
.about { padding: 8px 0 0 5px; }
.about h4 { font: 13px/16px Verdana, "DejaVu Sans", sans-serif; letter-spacing: .47px; color: #808080; }
.about p { margin-top: 5px; }
.target { display: flex; align-items: center; margin: auto 0 6px 1px; letter-spacing: .24px; }
.select { width: 98px; height: 19px; margin-left: 2px; padding: 0 1px 0 3px; border: 1px solid #808080; border-right-color: #d4d0c8; border-bottom-color: #d4d0c8; box-shadow: inset 1px 1px #404040; background: #fff; color: #000; display: flex; align-items: center; justify-content: space-between; letter-spacing: .17px; }
.select .drop-btn { height: 15px; }
.select .drop-btn svg { width: 5px; height: 3px; }
.actions { display: flex; justify-content: flex-end; gap: 4px; padding: 5px 5px 0 0; }
.actions button { width: 100px; height: 22px; padding: 1px 0 0; font: inherit; background: #d4d0c8; border: 1px solid #fff; border-right-color: #404040; border-bottom-color: #404040; border-radius: 0; box-shadow: inset -1px -1px #808080; }
.actions .default { border-color: #000; box-shadow: inset 1px 1px #fff, inset -1px -1px #404040, inset -2px -2px #808080; }

.page { height: 77px; display: flex; color: #5f6062; overflow: hidden; }
.page aside { width: 155px; border-right: 1px solid #d8d8d8; padding: 10px 0 0 10px; display: flex; flex-direction: column; }
.page aside h2 { font-size: 13px; line-height: 16px; color: #0072bc; }
.page aside a { color: #2b4055; margin-top: 8px; line-height: 14px; }
.page article { width: 602px; height: 90px; margin: 4px 0 0 4px; border: 1px solid #a9d3ef; padding: 9px 0 0 10px; }
.page h1 { font-size: 17px; line-height: 20px; letter-spacing: .13px; }
.page p { line-height: 13px; letter-spacing: .17px; }
.page .wide { letter-spacing: .26px; }
.page h3 { font-size: 11px; font-weight: bold; line-height: 13px; margin-top: 13px; letter-spacing: .22px; }
.scrollbar { width: 16px; height: 77px; margin-left: 4px; display: flex; flex-direction: column; background: repeating-conic-gradient(#fff 0 25%, #d4d0c8 0 50%) 0 0 / 2px 2px; }
.sb, .thumb { width: 16px; height: 16px; background: #d4d0c8; border: 1px solid #fff; border-right-color: #404040; border-bottom-color: #404040; box-shadow: inset -1px -1px #808080; display: flex; align-items: center; justify-content: center; }
.sb svg { width: 7px; height: 4px; }
.thumb { height: 11px; }
.sb.end { margin-top: auto; }

.status { height: 20px; padding-top: 2px; display: flex; gap: 2px; }
.pane { border: 1px solid #808080; border-right-color: #fff; border-bottom-color: #fff; display: flex; align-items: center; }
.addr { width: 234px; letter-spacing: -.06px; }
.s { width: 22px; }
.zone { width: 250px; padding-left: 1px; letter-spacing: -.06px; }
.zone span { margin-left: 3px; }
.lock { width: 35px; padding-left: 2px; }
.lock .caret { margin-left: 6px; }
.zoom { width: 92px; padding-left: 5px; border-right: 0; }
.zoom .lens { width: 13px; height: 13px; }
.zoom span { margin-left: 2px; width: 43px; }
.grip { width: 12px; height: 12px; margin-left: auto; align-self: flex-end; }
```
